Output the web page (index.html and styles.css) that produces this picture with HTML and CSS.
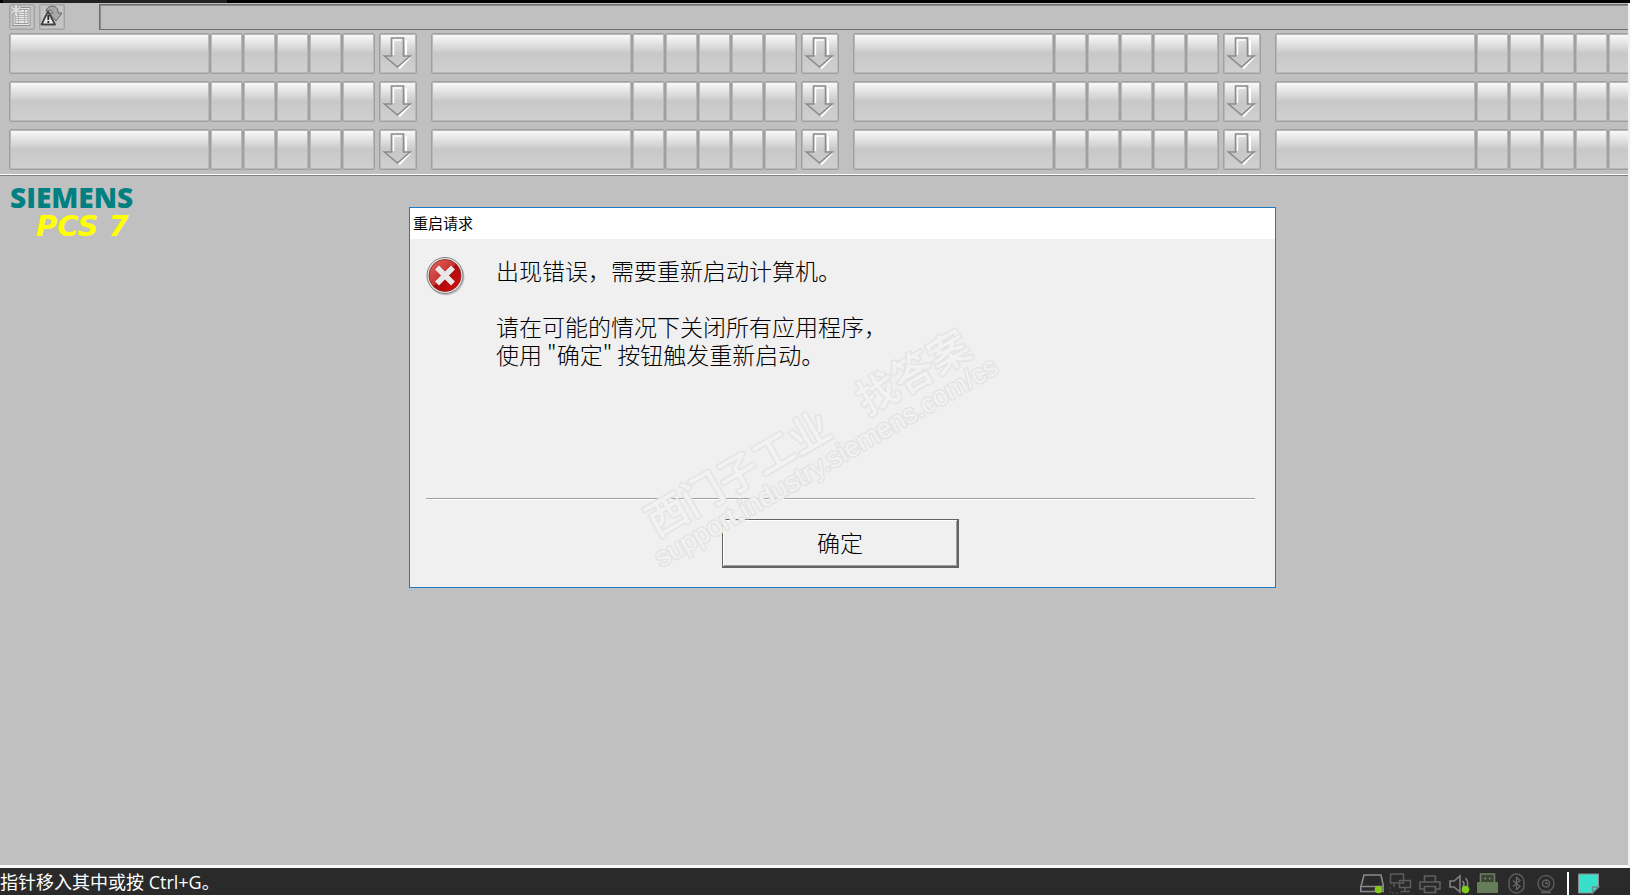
FILE: index.html
```
<!DOCTYPE html>
<html lang="zh-CN">
<head>
    <meta charset="UTF-8">
    <meta name="viewport" content="width=device-width, initial-scale=1.0">
    <title>PCS 7</title>
    <link rel="stylesheet" href="styles.css">
</head>
<body>
    <svg class="defs" width="0" height="0" aria-hidden="true">
        <symbol id="arrow" viewBox="0 0 34 36">
            <path d="M25 4v16M29 21L18 32.500" fill="none" stroke="#fff" stroke-width="2"/>
            <path d="M10.500 2h12v18h6.500L16.500 31 3.500 20h7z" fill="#c8c8c8" fill-opacity=".4" stroke="#8c8c8c" stroke-width="1.600"/>
            <path d="M12.500 19V4h8" fill="none" stroke="#fff" stroke-width="1.400"/>
        </symbol>
    </svg>

    <div class="strip"></div>
    <div class="screen">
        <header class="overview">
            <div class="toolbar">
                <button type="button" class="tool" aria-label="列表">
                    <svg width="24" height="24" viewBox="0 0 24 24">
                        <rect x="3" y="2.500" width="17" height="18" fill="#e8e8e8" stroke="#909090"/>
                        <rect x="5" y="4.500" width="13" height="14" fill="none" stroke="#999"/>
                        <path d="M5 7.500h13M5 9.500h13M5 11.500h13M5 13.500h13M5 15.500h13M8.500 5v13M14.500 5v13" stroke="#b4b4b4" fill="none"/>
                        <path d="M6 0v10M1.500 2.500l9 5M10.500 2.500l-9 5" stroke="#a4a4a4" stroke-width="3"/>
                        <path d="M6 0v10M1.500 2.500l9 5M10.500 2.500l-9 5" stroke="#dedede" stroke-width="2"/>
                    </svg>
                </button>
                <button type="button" class="tool" aria-label="报警">
                    <svg width="24" height="24" viewBox="0 0 24 24">
                        <path d="M6 6C7 0 17-1 18 6v2h4l-6 8-7-8h4C13 6 10 4 6 6z" fill="#a8a8a8" stroke="#666"/>
                        <path d="M8 6.500L1.500 19.500h13.500z" fill="#eee" stroke="#444" stroke-width="1.800" stroke-linejoin="round"/>
                        <path d="M8.300 10v5M8.300 16v2" stroke="#222" stroke-width="1.800"/>
                    </svg>
                </button>
                <input type="text" class="message" aria-label="消息行" readonly>
            </div>
            <div class="areas" id="areas"></div>
        </header>

        <main class="workspace">
            <div class="brand">
                <div class="brand-name">SIEMENS</div>
                <div class="brand-product">PCS 7</div>
            </div>

            <section class="dialog" role="alertdialog" aria-labelledby="dialogTitle">
                <h1 class="dialog-title" id="dialogTitle">重启请求</h1>
                <div class="dialog-body">
                    <div class="dialog-content">
                        <svg class="error-icon" width="42" height="42" viewBox="0 0 42 42">
                            <defs>
                                <linearGradient id="red" x1="0" y1="0" x2="1" y2="1">
                                    <stop offset="0" stop-color="#e06a66"/>
                                    <stop offset=".48" stop-color="#c9322f"/>
                                    <stop offset=".5" stop-color="#a80c0c"/>
                                    <stop offset="1" stop-color="#e00c0c"/>
                                </linearGradient>
                            </defs>
                            <circle cx="20" cy="21" r="18.500" fill="#a8a8a8" opacity=".6"/>
                            <circle cx="19" cy="19.500" r="18" fill="#e4e4e4" stroke="#808080"/>
                            <circle cx="19" cy="19.500" r="16" fill="url(#red)" stroke="#8e1d1d" stroke-width=".8"/>
                            <path d="M11 11.500l16 16M27 11.500l-16 16" stroke="#e8e8e8" stroke-width="5.500"/>
                        </svg>
                        <div class="dialog-text">
                            <p>出现错误，需要重新启动计算机。</p>
                            <p>请在可能的情况下关闭所有应用程序，<br>使用 "确定" 按钮触发重新启动。</p>
                        </div>
                    </div>
                    <div class="dialog-actions">
                        <button type="button" class="ok">确定</button>
                    </div>
                </div>
            </section>

            <svg class="watermark" width="420" height="280" viewBox="0 0 420 280">
                <g transform="translate(34 218) rotate(-30)">
                    <text class="mark-cn" x="2" y="2">西门子工业</text>
                    <text class="mark-cn" x="245" y="2">找答案</text>
                    <text class="mark-url" x="-9" y="30">support.industry.siemens.com/cs</text>
                </g>
            </svg>
        </main>
    </div>

    <footer class="statusbar">
        <span class="hint">指针移入其中或按 Ctrl+G。</span>
        <div class="tray">
            <svg width="24" height="22" viewBox="0 0 24 22">
                <path d="M1 13.500L4 2h17l2.500 11.500M.800 13.500h22.400v5H.800z" fill="none" stroke="#8a8a8a" stroke-width="1.600"/>
                <circle cx="18.500" cy="16.500" r="3.800" fill="#82c91e"/>
            </svg>
            <svg width="24" height="22" viewBox="0 0 24 22">
                <path d="M1.500 1h13v9h-13zM10.500 7.500h11v7h-11zM16 15v4M12 18.500h9M5 11v3" fill="none" stroke="#5c5c5c" stroke-width="1.500"/>
                <path d="M1 14v6h11" fill="none" stroke="#555" stroke-dasharray="2 2"/>
            </svg>
            <svg width="24" height="22" viewBox="0 0 24 22">
                <path d="M6.500 9V3h11v6M6 16H2V9h20v7h-4M6.500 13.500h11v6h-11z" fill="none" stroke="#606060" stroke-width="1.600"/>
            </svg>
            <svg width="24" height="22" viewBox="0 0 24 22">
                <path d="M3 8v6h4l6 5V3L7 8zM3 10V8M15.500 8c2 2 2 4 0 6M18.500 5c3 3 3 9 0 12" fill="none" stroke="#808080" stroke-width="1.600"/>
                <circle cx="18.500" cy="16.500" r="3.800" fill="#82c91e"/>
            </svg>
            <svg width="24" height="22" viewBox="0 0 24 22">
                <path d="M4.500 9V1h14v8" fill="#3c4635" stroke="#6c8060" stroke-width="1.600"/>
                <path d="M8.500 5.500h1.500M13 5.500h1.500" stroke="#8ba07c" stroke-width="1.500"/>
                <rect x="1" y="9" width="21" height="11" rx="1" fill="#667d59"/>
            </svg>
            <svg width="24" height="22" viewBox="0 0 24 22">
                <rect x="4" y="1" width="15" height="19" rx="7.500" fill="none" stroke="#5c5c5c" stroke-width="1.500"/>
                <path d="M8 7.500l7 6-3.500 3V4.500l3.500 3-7 6" fill="none" stroke="#666" stroke-width="1.300"/>
            </svg>
            <svg width="24" height="22" viewBox="0 0 24 22">
                <circle cx="12" cy="10.500" r="8" fill="none" stroke="#585858" stroke-width="1.500"/>
                <circle cx="12" cy="10.500" r="3.500" fill="none" stroke="#606060" stroke-width="1.500"/>
                <path d="M12 8.500v2h2M7 19.500h10" fill="none" stroke="#606060" stroke-width="1.400"/>
            </svg>
            <span class="tray-line"></span>
            <svg width="22" height="22" viewBox="0 0 22 22">
                <path d="M.500 1h20v13l-6 6H.500z" fill="#38e0cb" stroke="#8c8c8c"/>
                <path d="M20.500 14h-6v6z" fill="#38e0cb" stroke="#6e8a86" stroke-width="1.400"/>
                <path d="M21.500 15v6h-6z" fill="#2a2a2a"/>
            </svg>
        </div>
    </footer>

    <script>
const areas = document.getElementById('areas');
const ROWS = 3;
const COLS = 4;
const CELLS = 5;

for (let i = 0; i < ROWS * COLS; i++) {
  const area = document.createElement('div');
  area.className = 'area';

  let html = `<button type="button" class="key area-name" aria-label="区域 ${i + 1}"></button>`;
  for (let c = 0; c < CELLS; c++) {
    html += '<span class="key cell"></span>';
  }
  html += `<button type="button" class="key down" aria-label="展开 ${i + 1}">
    <svg width="34" height="36"><use href="#arrow"/></svg>
  </button>`;

  area.innerHTML = html;
  areas.appendChild(area);
}
    </script>
</body>
</html>
```
FILE: styles.css
```
* {
    box-sizing: border-box;
}
body {
    margin: 0;
    min-height: 100vh;
    display: flex;
    flex-direction: column;
    overflow: hidden;
    background-color: #c0c0c0;
    font-family: "Open Sans", "Noto Sans CJK SC", sans-serif;
}
.defs {
    position: absolute;
}
button,
input {
    margin: 0;
    padding: 0;
    font-family: inherit;
}
.strip {
    height: 3px;
    background: linear-gradient(to right, #000 3px, #222 3px, #222 227px, #000 227px);
}
.screen {
    flex: 1;
    display: flex;
    flex-direction: column;
    border-right: 2px solid #f0f0f0;
    border-bottom: 3px solid #f8f8f8;
    overflow: hidden;
}

/* Overview area */
.overview {
    padding: 1px 0 5px 9px;
    border-bottom: 1px solid #808080;
    box-shadow: inset 0 -1px 0 #fff;
    overflow: hidden;
}
.toolbar {
    display: flex;
    gap: 4px;
    height: 26px;
}
.tool {
    width: 26px;
    height: 26px;
    display: flex;
    align-items: center;
    justify-content: center;
    background-color: #c4c4c4;
    border: 1px solid #a4a4a4;
    border-radius: 2px;
    box-shadow: inset 0 0 0 1px #b4b4b4;
}
.message {
    flex: 1;
    min-width: 0;
    margin-left: 30px;
    background-color: #c0c0c0;
    border: 1px solid #6e6e6e;
    border-right: none;
    border-radius: 0;
    box-shadow: inset 1px 1px 0 #8c8c8c;
    outline: none;
}
.areas {
    display: grid;
    grid-template-columns: repeat(4, 409px);
    gap: 7px 13px;
    margin-top: 3px;
}
.area {
    display: flex;
    height: 41px;
}
.key {
    background: linear-gradient(#fcfcfc 0%, #c8c8c8 50%, #d0d0d0 100%);
    border: 1px solid #a0a0a0;
    border-radius: 2px;
    box-shadow: inset 0 0 0 1px #b8b8b8;
}
.area-name {
    width: 201px;
}
.cell {
    width: 33px;
}
.down {
    width: 38px;
    margin-left: 4px;
    display: flex;
    align-items: center;
    justify-content: center;
}

/* Work area */
.workspace {
    flex: 1;
    position: relative;
    padding: 7px 10px;
}
.brand {
    display: flex;
    flex-direction: column;
}
.brand-name {
    color: #008080;
    font-size: 28px;
    font-weight: 800;
    line-height: 28px;
}
.brand-product {
    padding-left: 26px;
    color: #ff0;
    font-family: "DejaVu Sans", sans-serif;
    font-size: 29px;
    font-weight: bold;
    font-style: italic;
    line-height: 30px;
}

.dialog {
    position: absolute;
    top: 31px;
    left: 409px;
    width: 867px;
    background-color: #f0f0f0;
    border: 1px solid #1b7bc4;
}
.dialog-title {
    margin: 0;
    padding: 0 3px 1px;
    background-color: #fff;
    font-family: "Noto Sans CJK SC", sans-serif;
    font-size: 15px;
    font-weight: normal;
    line-height: 30px;
}
.dialog-body {
    padding: 17px 20px 19px 16px;
}
.dialog-content {
    display: flex;
    gap: 28px;
    height: 243px;
    border-bottom: 1px solid #a0a0a0;
    box-shadow: 0 1px 0 #fff;
}
.error-icon {
    flex: none;
}
.dialog-text {
    font-family: "Noto Sans CJK SC", sans-serif;
    font-size: 23px;
    font-weight: 300;
    line-height: 28px;
}
.dialog-text p {
    margin: 0 0 28px;
}
.dialog-actions {
    display: flex;
    justify-content: center;
    padding-top: 20px;
}
.ok {
    width: 237px;
    height: 49px;
    padding-bottom: 2px;
    background-color: #f0f0f0;
    border: 1px solid #646464;
    border-right-width: 2px;
    border-bottom-width: 2px;
    box-shadow: inset 1px 1px 0 #fff, inset -1px -1px 0 #a0a0a0;
    color: #000;
    font-family: "Noto Sans CJK SC", sans-serif;
    font-size: 23px;
    font-weight: 300;
}

.watermark {
    position: absolute;
    top: 143px;
    left: 620px;
    overflow: visible;
    pointer-events: none;
}
.watermark text {
    fill: #f2f2f2;
    stroke: #e4e4e4;
    stroke-width: 3px;
    paint-order: stroke;
    stroke-linejoin: round;
}
.mark-cn {
    font-family: "Noto Sans CJK SC", sans-serif;
    font-size: 41px;
    font-weight: 500;
}
.mark-url {
    font-family: "Liberation Sans", Arial, sans-serif;
    font-size: 27px;
}

/* Status bar */
.statusbar {
    display: flex;
    align-items: center;
    justify-content: space-between;
    height: 27px;
    padding-right: 30px;
    background-color: #2a2a2a;
    color: #fff;
}
.hint {
    padding-top: 2px;
    font-size: 18px;
    line-height: 27px;
    white-space: nowrap;
}
.tray {
    display: flex;
    align-items: center;
    gap: 5px;
    padding-top: 4px;
}
.tray-line {
    width: 2px;
    height: 24px;
    margin: 0 4px;
    background-color: #fff;
}
```
